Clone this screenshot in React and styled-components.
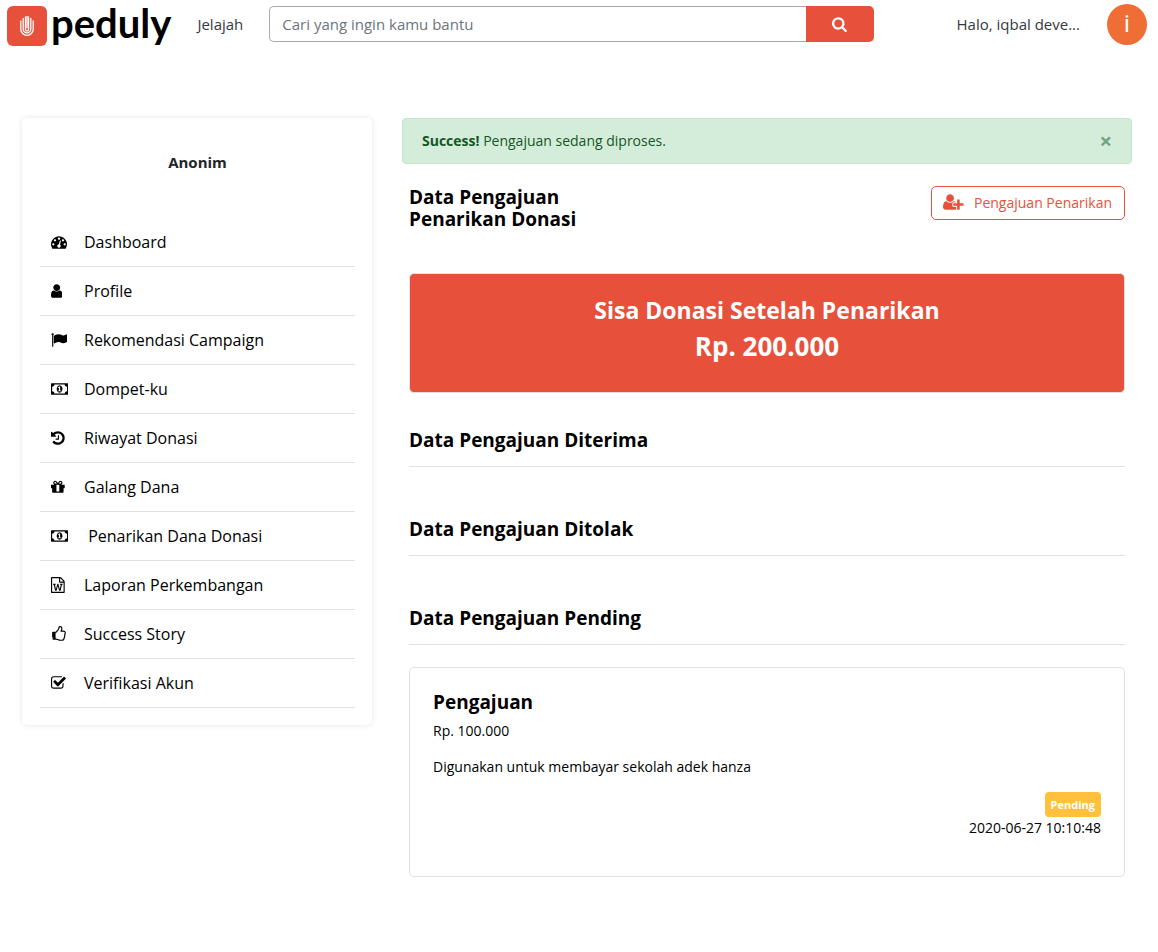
import React from "react";
import styled, { createGlobalStyle } from "styled-components";

const GlobalStyle = createGlobalStyle`
  *, *::before, *::after { box-sizing: border-box; }
  body {
    margin: 0;
    background: #fff;
    color: #000;
    font: 14px/22px "Open Sans", "Noto Sans", sans-serif;
  }
  h1, h2, h3, p, ul { margin: 0; padding: 0; }
  button, input { font-family: inherit; }
`;

const RED = "#e7513b";
const LINE = "#dee2e6";

/* ---------- icons ---------- */

const ICONS = {
  tachometer: ["0 0 1792 1792", "M384 1152q0-53-37.5-90.5t-90.5-37.5-90.5 37.5-37.5 90.5 37.5 90.5 90.5 37.5 90.5-37.5 37.5-90.5zm192-448q0-53-37.5-90.5t-90.5-37.5-90.5 37.5-37.5 90.5 37.5 90.5 90.5 37.5 90.5-37.5 37.5-90.5zm428 481l101-382q6-26-7.5-48.5t-38.5-29.5-48 6.5-30 39.5l-101 382q-60 5-107 43.5t-63 98.5q-20 77 20 146t117 89 146-20 89-117q16-60-6-117t-72-91zm660-33q0-53-37.5-90.5t-90.5-37.5-90.5 37.5-37.5 90.5 37.5 90.5 90.5 37.5 90.5-37.5 37.5-90.5zm-640-640q0-53-37.5-90.5t-90.5-37.5-90.5 37.5-37.5 90.5 37.5 90.5 90.5 37.5 90.5-37.5 37.5-90.5zm448 192q0-53-37.5-90.5t-90.5-37.5-90.5 37.5-37.5 90.5 37.5 90.5 90.5 37.5 90.5-37.5 37.5-90.5zm320 448q0 261-141 483-19 29-54 29h-1402q-35 0-54-29-141-221-141-483 0-182 71-348t191-286 286-191 348-71 348 71 286 191 191 286 71 348z"],
  user: ["256 0 1280 1792", "M1536 1399q0 109-62.5 187t-150.5 78h-854q-88 0-150.5-78t-62.5-187q0-85 8.5-160.5t31.5-152 58.5-131 94-89 134.5-34.5q131 128 313 128t313-128q76 0 134.5 34.5t94 89 58.5 131 31.5 152 8.5 160.5zm-256-887q0 159-112.5 271.5t-271.5 112.5-271.5-112.5-112.5-271.5 112.5-271.5 271.5-112.5 271.5 112.5 112.5 271.5z"],
  flag: ["0 0 1792 1792", "M320 256q0 72-64 110v1266q0 13-9.5 22.5t-22.5 9.5h-64q-13 0-22.5-9.5t-9.5-22.5v-1266q-64-38-64-110 0-53 37.5-90.5t90.5-37.5 90.5 37.5 37.5 90.5zm1472 64v763q0 25-12.5 38.5t-39.5 27.5q-215 116-369 116-61 0-123.5-22t-108.5-48-115.5-48-142.5-22q-192 0-464 146-17 9-33 9-26 0-45-19t-19-45v-742q0-32 31-55 21-14 79-43 236-120 421-120 107 0 200 29t219 88q38 19 88 19 54 0 117.5-21t110-47 88-47 54.5-21q26 0 45 19t19 45z"],
  money: ["0 0 1920 1792", "M768 1152h384v-96h-128v-448h-114l-148 137 77 80q42-37 55-57h2v288h-128v96zm512-256q0 70-21 142t-59.5 134-101.5 101-138 39-138-39-101.5-101-59.5-134-21-142 21-142 59.5-134 101.5-101 138-39 138 39 101.5 101 59.5 134 21 142zm512 256v-512q-106 0-181-75t-75-181h-1152q0 106-75 181t-181 75v512q106 0 181 75t75 181h1152q0-106 75-181t181-75zm128-832v1152q0 26-19 45t-45 19h-1792q-26 0-45-19t-19-45v-1152q0-26 19-45t45-19h1792q26 0 45 19t19 45z"],
  history: ["128 0 1536 1792", "M1664 896q0 156-61 298t-164 245-245 164-298 61q-172 0-327-72.5t-264-204.5q-7-10-6.5-22.5t8.5-20.5l137-138q10-9 25-9 16 2 23 12 73 95 179 147t225 52q104 0 198.5-40.5t163.5-109.5 109.5-163.5 40.5-198.5-40.5-198.5-109.5-163.5-163.5-109.5-198.5-40.5q-98 0-188 35.5t-160 101.5l137 138q31 30 14 69-17 40-59 40h-448q-26 0-45-19t-19-45v-448q0-42 40-59 39-17 69 14l130 129q107-101 244.5-156.5t284.5-55.5q156 0 298 61t245 164 164 245 61 298zm-640-288v448q0 14-9 23t-23 9h-320q-14 0-23-9t-9-23v-64q0-14 9-23t23-9h224v-352q0-14 9-23t23-9h64q14 0 23 9t9 23z"],
  gift: ["128 0 1536 1792", "M1056 1356v-716h-320v716q0 25 18 38.5t46 13.5h192q28 0 46-13.5t18-38.5zm-456-844h195l-126-161q-26-31-69-31-40 0-68 28t-28 68 28 68 68 28zm688-96q0-40-28-68t-68-28q-43 0-69 31l-125 161h194q40 0 68-28t28-68zm376 256v320q0 14-9 23t-23 9h-96v416q0 40-28 68t-68 28h-1088q-40 0-68-28t-28-68v-416h-96q-14 0-23-9t-9-23v-320q0-14 9-23t23-9h440q-93 0-158.5-65.5t-65.5-158.5 65.5-158.5 158.5-65.5q107 0 168 77l128 165 128-165q61-77 168-77 93 0 158.5 65.5t65.5 158.5-65.5 158.5-158.5 65.5h440q14 0 23 9t9 23z"],
  word: ["128 0 1536 1792", "M1596 380q28 28 48 76t20 88v1152q0 40-28 68t-68 28h-1344q-40 0-68-28t-28-68v-1600q0-40 28-68t68-28h896q40 0 88 20t76 48zm-444-244v376h376q-10-29-22-41l-313-313q-12-12-41-22zm384 1528v-1024h-416q-40 0-68-28t-28-68v-416h-768v1536h1280zm-1175-896v107h70l164 661h159l128-485q7-20 10-46 2-16 2-24h4l3 24q1 3 3.5 20t5.5 26l128 485h159l164-661h70v-107h-300v107h90l-99 438q-5 20-7 46l-2 21h-4q0-3-.5-6.5t-1.5-8-1-6.5q-1-5-4-21t-5-25l-144-545h-114l-144 545q-2 9-4.5 24.5t-3.5 21.5l-4 21h-4l-2-21q-2-26-7-46l-99-438h90v-107h-300z"],
  thumb: ["128 0 1664 1792", "M384 1344q0-26-19-45t-45-19-45 19-19 45 19 45 45 19 45-19 19-45zm1280-576q0-51-39-89.5t-89-38.5h-352q0-58 48-159.5t48-160.5q0-98-32-145t-128-47q-26 26-38 85t-30.5 125.5-59.5 109.5q-22 23-77 91-4 5-23 30t-31.5 41-34.5 42.5-40 44-38.5 35.5-40 27-35.5 9h-32v640h32q13 0 31.5 3t33 6.5 38 11 35 11.5 35.5 12.5 29 10.5q211 73 342 73h121q192 0 192-167 0-26-5-56 30-16 47.5-52.5t17.5-73.5-18-69q53-50 53-119 0-25-10-55.5t-25-47.5q32-1 53.5-47t21.5-81zm128-1q0 89-49 163 9 33 9 69 0 77-38 144 3 21 3 43 0 101-60 178 1 139-85 219.5t-227 80.5h-129q-96 0-189.5-22.5t-216.5-65.5q-116-40-138-40h-288q-53 0-90.5-37.5t-37.5-90.5v-640q0-53 37.5-90.5t90.5-37.5h274q36-24 137-155 58-75 107-128 24-25 35.5-85.5t30.5-126.5 62-108q39-37 90-37 84 0 151 32.5t102 101.5 35 186q0 93-48 192h176q104 0 180 76t76 179z"],
  check: ["64 0 1664 1792", "M1472 930v318q0 119-84.5 203.5t-203.5 84.5h-832q-119 0-203.5-84.5t-84.5-203.5v-832q0-119 84.5-203.5t203.5-84.5h832q63 0 117 25 15 7 18 23 3 17-9 29l-49 49q-10 10-23 10-3 0-9-2-23-6-45-6h-832q-66 0-113 47t-47 113v832q0 66 47 113t113 47h832q66 0 113-47t47-113v-254q0-13 9-22l64-64q10-10 23-10 6 0 12 3 20 8 20 29zm231-489l-814 814q-24 24-57 24t-57-24l-430-430q-24-24-24-57t24-57l110-110q24-24 57-24t57 24l263 263 647-647q24-24 57-24t57 24l110 110q24 24 24 57t-24 57z"],
  search: ["64 0 1664 1792", "M1216 832q0-185-131.5-316.5t-316.5-131.5-316.5 131.5-131.5 316.5 131.5 316.5 316.5 131.5 316.5-131.5 131.5-316.5zm512 832q0 52-38 90t-90 38q-54 0-90-38l-343-342q-179 124-399 124-143 0-273.5-55.5t-225-150-150-225-55.5-273.5 55.5-273.5 150-225 225-150 273.5-55.5 273.5 55.5 225 150 150 225 55.5 273.5q0 220-124 399l343 343q37 37 37 90z"],
  userPlus: ["0 0 2048 1792", "M704 896q-159 0-271.5-112.5t-112.5-271.5 112.5-271.5 271.5-112.5 271.5 112.5 112.5 271.5-112.5 271.5-271.5 112.5zm960 128h352q13 0 22.5 9.5t9.5 22.5v192q0 13-9.5 22.5t-22.5 9.5h-352v352q0 13-9.5 22.5t-22.5 9.5h-192q-13 0-22.5-9.5t-9.5-22.5v-352h-352q-13 0-22.5-9.5t-9.5-22.5v-192q0-13 9.5-22.5t22.5-9.5h352v-352q0-13 9.5-22.5t22.5-9.5h192q13 0 22.5 9.5t9.5 22.5v352zm-736 224q0 52 38 90t90 38h256v238q-68 50-171 50h-874q-121 0-194-69t-73-190q0-53 3.5-103.5t14-109 26.5-108.5 43-97.5 62-81 85.5-53.5 111.5-20q19 0 39 17 79 61 154.5 91.5t164.5 30.5 164.5-30.5 154.5-91.5q20-17 39-17 132 0 217 96h-223q-52 0-90 38t-38 90v192z"],
};

const IconSvg = styled.svg`
  display: block;
  height: ${(p) => p.$size}px;
  fill: currentColor;
`;

function Icon({ name, size = 16 }) {
  const [viewBox, d] = ICONS[name];
  return (
    <IconSvg viewBox={viewBox} $size={size} aria-hidden="true">
      <path d={d} />
    </IconSvg>
  );
}

/* ---------- header ---------- */

const Header = styled.header`
  display: flex;
  align-items: flex-start;
  padding: 4px 11px 0 7px;
`;

const Brand = styled.a`
  display: flex;
  align-items: center;
  gap: 4px;
  height: 40px;
  margin-top: 2px;
  color: #000;
  text-decoration: none;
`;

const BrandMark = styled.svg`
  width: 40px;
  height: 40px;
`;

const BrandName = styled.span`
  font: 700 40px/34px Lato, sans-serif;
  padding-bottom: 6px;
`;

const NavLink = styled.a`
  margin: 0 26px;
  font-size: 15px;
  line-height: 40px;
  color: #343a40;
  text-decoration: none;
`;

const Search = styled.form`
  display: flex;
  flex: 1;
  height: 36px;
  margin-top: 2px;
`;

const SearchInput = styled.input`
  flex: 1;
  min-width: 0;
  padding: 0 12px;
  border: 1px solid #aaa;
  border-right: 0;
  border-radius: 5px 0 0 5px;
  font-size: 15px;
  color: #495057;
  outline: none;
  &::placeholder { color: #6c757d; opacity: 1; }
`;

const SearchButton = styled.button`
  display: flex;
  align-items: center;
  justify-content: center;
  width: 68px;
  border: 0;
  border-radius: 0 5px 5px 0;
  background: ${RED};
  color: #fff;
`;

const Greeting = styled.span`
  margin: 0 27px 0 83px;
  font-size: 15px;
  line-height: 40px;
  color: #343a40;
  white-space: nowrap;
`;

const Avatar = styled.span`
  display: flex;
  align-items: center;
  justify-content: center;
  width: 40px;
  height: 41px;
  border-radius: 50%;
  background: #ef6e36;
  color: #fff;
  font: 24px/41px Roboto, sans-serif;
`;

/* ---------- page ---------- */

const Page = styled.div`
  display: grid;
  grid-template-columns: 350px minmax(0, 1fr);
  align-items: start;
  gap: 30px;
  padding: 72px 26px 75px 22px;
`;

const Sidebar = styled.aside`
  padding: 33px 17px 17px 18px;
  border-radius: 5px;
  box-shadow: 0 0 6px rgba(0, 0, 0, 0.1);
`;

const UserName = styled.h2`
  margin-bottom: 45px;
  font-size: 15px;
  line-height: 22px;
  text-align: center;
  color: #212529;
`;

const Menu = styled.ul`
  list-style: none;
`;

const MenuLink = styled.a`
  display: grid;
  grid-template-columns: 20px 1fr;
  align-items: center;
  gap: 13px;
  height: 49px;
  padding-left: 11px;
  border-bottom: 1px solid ${LINE};
  font-size: 16px;
  color: #000;
  text-decoration: none;
`;

const IconCell = styled.span`
  display: flex;
`;

const Alert = styled.div`
  display: flex;
  justify-content: space-between;
  align-items: center;
  height: 46px;
  padding: 0 19px;
  border: 1px solid #c3e6cb;
  border-radius: 4px;
  background: #d4edda;
  color: #155724;
`;

const CloseButton = styled.button`
  padding: 0 0 2px;
  border: 0;
  background: none;
  color: #71a381;
  font-size: 22px;
  font-weight: 700;
  line-height: 22px;
`;

const Content = styled.div`
  padding: 22px 7px 0;
`;

const TitleRow = styled.div`
  display: flex;
  justify-content: space-between;
  align-items: flex-start;
  margin-bottom: 43px;
`;

const Title = styled.h1`
  max-width: 200px;
  font-size: 19px;
  line-height: 22px;
`;

const OutlineButton = styled.button`
  display: flex;
  align-items: center;
  gap: 10px;
  height: 34px;
  padding: 0 12px 2px 11px;
  border: 1px solid ${RED};
  border-radius: 5px;
  background: #fff;
  color: ${RED};
  font-size: 14px;
`;

const BalanceCard = styled.section`
  height: 120px;
  padding: 18px 20px;
  border: 1px solid ${LINE};
  border-radius: 5px;
  background: ${RED};
  color: #fff;
  text-align: center;
`;

const BalanceLabel = styled.h2`
  font-size: 23px;
  line-height: 36px;
`;

const BalanceAmount = styled.p`
  font-size: 26px;
  font-weight: 700;
  line-height: 36px;
`;

const Section = styled.section`
  padding-top: 36px;
  & + & { padding-top: 51px; }
`;

const SectionTitle = styled.h2`
  padding-bottom: 15px;
  border-bottom: 1px solid ${LINE};
  font-size: 19px;
  line-height: 22px;
`;

const RequestCard = styled.article`
  display: flex;
  flex-direction: column;
  margin-top: 22px;
  padding: 23px 23px 37px;
  border: 1px solid ${LINE};
  border-radius: 5px;
`;

const RequestTitle = styled.h3`
  margin-bottom: 7px;
  font-size: 19px;
  line-height: 22px;
`;

const RequestText = styled.p`
  margin-bottom: 14px;
`;

const Badge = styled.span`
  align-self: flex-end;
  padding: 0 6px;
  border-radius: 4px;
  background: #ffc13b;
  color: #fff;
  font-size: 11px;
  font-weight: 700;
  line-height: 25px;
`;

const Timestamp = styled.time`
  align-self: flex-end;
`;

const MENU = [
  ["tachometer", "Dashboard"],
  ["user", "Profile"],
  ["flag", "Rekomendasi Campaign"],
  ["money", "Dompet-ku"],
  ["history", "Riwayat Donasi"],
  ["gift", "Galang Dana"],
  ["money", "\u00a0Penarikan Dana Donasi"],
  ["word", "Laporan Perkembangan"],
  ["thumb", "Success Story"],
  ["check", "Verifikasi Akun"],
];

export default function App() {
  return (
    <>
      <GlobalStyle />
      <Header>
        <Brand href="#">
          <BrandMark viewBox="0 0 40 40" aria-hidden="true">
            <rect width="40" height="40" rx="6" fill={RED} />
            <g fill="none" stroke="#fff" strokeWidth="1.3" strokeLinecap="round">
              <path d="M13.8 15v8.200a6.200 6.200 0 0 0 12.400 0v-8.200" />
              <path d="M16.200 12.500v10.500a3.800 3.800 0 0 0 7.600 0v-10.500" />
              <path d="M18.500 11v12.500a1.500 1.500 0 0 0 3 0v-12.500" />
              <path d="M20 10.500v11" />
            </g>
          </BrandMark>
          <BrandName>peduly</BrandName>
        </Brand>
        <NavLink href="#">Jelajah</NavLink>
        <Search onSubmit={(e) => e.preventDefault()}>
          <SearchInput type="text" aria-label="Cari" placeholder="Cari yang ingin kamu bantu" />
          <SearchButton type="submit" aria-label="Cari">
            <Icon name="search" />
          </SearchButton>
        </Search>
        <Greeting>Halo, iqbal deve...</Greeting>
        <Avatar>i</Avatar>
      </Header>

      <Page>
        <Sidebar>
          <UserName>Anonim</UserName>
          <Menu>
            {MENU.map(([icon, label]) => (
              <li key={label}>
                <MenuLink href="#">
                  <IconCell><Icon name={icon} /></IconCell>
                  <span>{label}</span>
                </MenuLink>
              </li>
            ))}
          </Menu>
        </Sidebar>

        <main>
          <Alert role="alert">
            <span><strong>Success!</strong> Pengajuan sedang diproses.</span>
            <CloseButton type="button" aria-label="Tutup">×</CloseButton>
          </Alert>
          <Content>
            <TitleRow>
              <Title>Data Pengajuan Penarikan Donasi</Title>
              <OutlineButton type="button">
                <Icon name="userPlus" size={18} />
                Pengajuan Penarikan
              </OutlineButton>
            </TitleRow>
            <BalanceCard>
              <BalanceLabel>Sisa Donasi Setelah Penarikan</BalanceLabel>
              <BalanceAmount>Rp. 200.000</BalanceAmount>
            </BalanceCard>
            <Section>
              <SectionTitle>Data Pengajuan Diterima</SectionTitle>
            </Section>
            <Section>
              <SectionTitle>Data Pengajuan Ditolak</SectionTitle>
            </Section>
            <Section>
              <SectionTitle>Data Pengajuan Pending</SectionTitle>
              <RequestCard>
                <RequestTitle>Pengajuan</RequestTitle>
                <RequestText>Rp. 100.000</RequestText>
                <RequestText>Digunakan untuk membayar sekolah adek hanza</RequestText>
                <Badge>Pending</Badge>
                <Timestamp>2020-06-27 10:10:48</Timestamp>
              </RequestCard>
            </Section>
          </Content>
        </main>
      </Page>
    </>
  );
}
